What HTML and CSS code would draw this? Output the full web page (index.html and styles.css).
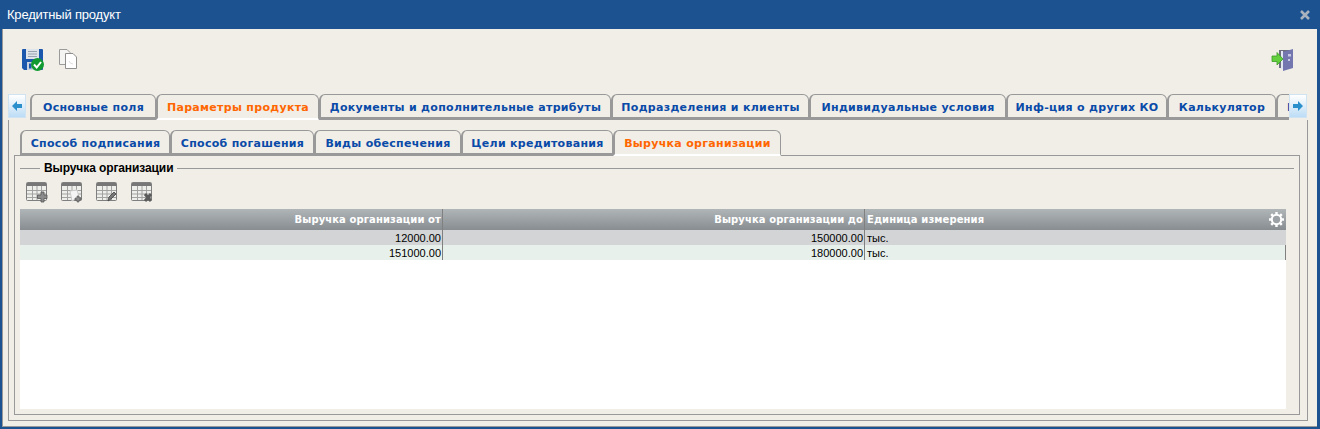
FILE: index.html
```html
<!DOCTYPE html>
<html lang="ru">

<head>
    <title>Кредитный продукт</title>
    <meta charset="UTF-8">
    <link rel="stylesheet" href="styles.css">
</head>

<body>
<div class="window">
    <div class="titlebar">
        <span class="title-text">Кредитный продукт</span>
        <svg class="close-icon" width="10" height="10" viewBox="0 0 10 10">
            <path d="M1 1 L9 9 M9 1 L1 9" stroke="#a9b2bd" stroke-width="2.6" fill="none"/>
        </svg>
    </div>

    <div class="content">
        <!-- верхняя панель -->
        <div class="toolbar">
            <svg class="tool-save" width="23" height="23" viewBox="0 0 23 23">
                <path d="M1 2 Q1 1 2 1 H21 Q22 1 22 2 V21 Q22 22 21 22 H3 L1 20 Z" fill="#1b57ad"/>
                <rect x="5" y="1" width="13" height="10" fill="#dfe3ea"/>
                <path d="M7 3.500 H16 M7 6 H16 M7 8.500 H16" stroke="#9aa3b2" stroke-width="1"/>
                <rect x="6" y="14" width="9" height="8" fill="#c9d1de"/>
                <rect x="8" y="15.500" width="2.500" height="5" fill="#1b57ad"/>
                <circle cx="16.500" cy="16.500" r="6.500" fill="#129a32"/>
                <path d="M13 16.500 L15.700 19.500 L20 14" stroke="#fff" stroke-width="2" fill="none"/>
            </svg>
            <svg class="tool-copy" width="20" height="22" viewBox="0 0 20 22">
                <path d="M1.500 1.500 H9 L12 4.500 V16.500 H1.500 Z" fill="#f4f4f2" stroke="#9b9b9b"/>
                <path d="M7.500 5.500 H15 L18.500 9 V20.500 H7.500 Z" fill="#fff" stroke="#8f8f8f"/>
                <path d="M11 13 Q12 16 15 16" stroke="#ddd" fill="none"/>
            </svg>
            <svg class="tool-exit" width="25" height="23" viewBox="0 0 25 23">
                <path d="M8 2 H21 V20 H8 Z" fill="#6d6f80"/>
                <path d="M12 4 L22 1 V20 L12 23 Z" fill="#7476b0"/>
                <path d="M10 3 H12 V21 H10 Z" fill="#e2e6f2"/>
                <rect x="17" y="6" width="3" height="2.500" fill="#c6c8e4"/>
                <rect x="17" y="11" width="2" height="2" fill="#c6c8e4"/>
                <path d="M1 8 H6 V4.500 L12 11 L6 17 V13.500 H1 Z" fill="#63cf3c" stroke="#3b9a24" stroke-width="0.800"/>
            </svg>
        </div>

        <!-- основные вкладки -->
        <div class="tab-strip">
            <div class="scroll-btn">
                <svg width="10" height="10" viewBox="0 0 10 10"><path d="M0 5 L5 0 V3 H10 V7 H5 V10 Z" fill="#2b8fcb"/></svg>
            </div>
            <div class="tabs tabs-main">
                <div class="tab">Основные поля</div>
                <div class="tab active">Параметры продукта</div>
                <div class="tab">Документы и дополнительные атрибуты</div>
                <div class="tab">Подразделения и клиенты</div>
                <div class="tab">Индивидуальные условия</div>
                <div class="tab">Инф-ция о других КО</div>
                <div class="tab">Калькулятор</div>
                <div class="tab tab-cut">П</div>
            </div>
            <div class="scroll-btn">
                <svg width="10" height="10" viewBox="0 0 10 10"><path d="M10 5 L5 0 V3 H0 V7 H5 V10 Z" fill="#2b8fcb"/></svg>
            </div>
        </div>

        <div class="outer-panel">
            <div class="tabs tabs-sub">
                <div class="tab">Способ подписания</div>
                <div class="tab">Способ погашения</div>
                <div class="tab">Виды обеспечения</div>
                <div class="tab">Цели кредитования</div>
                <div class="tab active">Выручка организации</div>
            </div>

            <div class="inner-panel">
                <div class="legend">
                    <span class="legend-text">Выручка организации</span>
                </div>

                <div class="grid-tools">
                    <svg width="22" height="21" viewBox="0 0 22 21">
                        <use href="#tbl"/>
                        <path d="M15 10 H18 V13 H21 V16.500 H18 V20 H15 V16.500 H11.500 V13 H15 Z" fill="#8b8b8b" stroke="#555" stroke-width="0.800"/>
                    </svg>
                    <svg width="22" height="21" viewBox="0 0 22 21">
                        <use href="#tbl"/>
                        <path d="M9 9 L16 8 L18 15 L11 19 Z" fill="#f4f4f4" stroke="#ccc"/>
                        <path d="M16 14 H18 V16 H20 V18 H18 V20 H16 V18 H14 V16 H16 Z" fill="#8b8b8b" stroke="#555" stroke-width="0.600"/>
                    </svg>
                    <svg width="22" height="21" viewBox="0 0 22 21">
                        <use href="#tbl"/>
                        <path d="M12 19 L13 15 L18 10 L20 12 L15 17 Z" fill="#777" stroke="#444" stroke-width="0.800"/>
                    </svg>
                    <svg width="22" height="21" viewBox="0 0 22 21">
                        <use href="#tbl"/>
                        <path d="M14 12 L20 19 M20 12 L14 19" stroke="#5c5c5c" stroke-width="3"/>
                    </svg>
                </div>

                <div class="grid">
                    <div class="row row-head">
                        <div class="cell num">Выручка организации от</div>
                        <div class="cell num">Выручка организации до</div>
                        <div class="cell unit">Единица измерения</div>
                        <svg class="gear" width="17" height="17" viewBox="0 0 17 17">
                            <path d="M8.500 1 V16 M1 8.500 H16 M3.200 3.200 L13.800 13.800 M13.800 3.200 L3.200 13.800" stroke="#fff" stroke-width="2.400"/>
                            <circle cx="8.500" cy="8.500" r="4.700" fill="#9da2a6" stroke="#fff" stroke-width="2"/>
                        </svg>
                    </div>
                    <div class="row row-selected">
                        <div class="cell num">12000.00</div>
                        <div class="cell num">150000.00</div>
                        <div class="cell unit">тыс.</div>
                    </div>
                    <div class="row row-alt">
                        <div class="cell num">151000.00</div>
                        <div class="cell num">180000.00</div>
                        <div class="cell unit">тыс.</div>
                    </div>
                </div>
            </div>
        </div>
    </div>
</div>

<!-- значок таблицы -->
<svg class="defs" width="0" height="0">
    <defs>
        <g id="tbl">
            <rect x="0.500" y="0.500" width="20" height="18" rx="1" fill="#eeeeea" stroke="#7f7f7f"/>
            <rect x="1" y="1" width="19" height="3" fill="#777"/>
            <path d="M1 8.500 H20 M1 12 H20 M1 15.500 H20 M6.500 4 V18 M11 4 V18 M15.500 4 V18" stroke="#a2a2a2"/>
        </g>
    </defs>
</svg>
</body>

</html>
```
FILE: styles.css
```css
html,
body {
    margin: 0;
    padding: 0;
    height: 100%;
    overflow: hidden;
}

body {
    background-color: #1c5290;
    font-family: "DejaVu Sans", sans-serif;
}

.defs {
    display: block;
}

.window {
    display: flex;
    flex-direction: column;
    height: 429px;
    box-sizing: border-box;
    padding: 0 3px 2px 2px;
}

/* заголовок окна */
.titlebar {
    display: flex;
    justify-content: space-between;
    align-items: center;
    height: 29px;
    flex: none;
    padding: 0 10px 0 5px;
    margin-right: -3px;
    box-sizing: border-box;
}

.title-text {
    font-family: "Liberation Sans", sans-serif;
    font-size: 13px;
    letter-spacing: -0.2px;
    color: #ffffff;
}

.content {
    flex: 1;
    display: flex;
    flex-direction: column;
    background-color: #f1eee7;
    border-left: 1px solid #999999;
    border-bottom: 1px solid #999999;
    min-height: 0;
}

/* верхняя панель */
.toolbar {
    display: flex;
    align-items: flex-start;
    height: 65px;
    flex: none;
    box-sizing: border-box;
    padding: 19px 21px 0 18px;
}

.tool-copy {
    margin-left: 14px;
}

.tool-exit {
    margin-left: auto;
}

/* вкладки */
.tab-strip {
    display: flex;
    flex: none;
    height: 26px;
    margin: 0 10px 0 5px;
}

.scroll-btn {
    flex: none;
    display: flex;
    align-items: center;
    justify-content: center;
    width: 18px;
    height: 24px;
    box-sizing: border-box;
    border: 1px solid #cfe3f3;
    background: linear-gradient(to bottom, #ffffff, #bcdcf5);
}

.tabs {
    display: flex;
    flex: 1;
    min-width: 0;
    overflow: hidden;
}

.tabs-main {
    padding-left: 5px;
    margin-left: -1px;
}

.tab {
    flex: none;
    height: 26px;
    line-height: 25px;
    box-sizing: border-box;
    border: 1px solid #999999;
    border-bottom: 3px solid #999999;
    border-left-width: 2px;
    border-radius: 6px 6px 0 0;
    font-size: 11px;
    font-weight: bold;
    letter-spacing: 0.3px;
    text-align: center;
    white-space: nowrap;
    color: #0a4aa8;
}

.tab.active {
    color: #ff6600;
    border-bottom: 2px solid #ffffff;
}

.tab-cut {
    padding-left: 9px;
    text-align: left;
}

/* ширина вкладок */
.tabs-main .tab:nth-child(1) { width: 126px; }
.tabs-main .tab:nth-child(2) { width: 163px; }
.tabs-main .tab:nth-child(3) { width: 292px; }
.tabs-main .tab:nth-child(4) { width: 198px; }
.tabs-main .tab:nth-child(5) { width: 197px; }
.tabs-main .tab:nth-child(6) { width: 161px; }
.tabs-main .tab:nth-child(7) { width: 109px; }
.tabs-main .tab:nth-child(8) { width: 100px; }

.tabs-sub .tab:nth-child(1) { width: 150px; }
.tabs-sub .tab:nth-child(2) { width: 144px; }
.tabs-sub .tab:nth-child(3) { width: 147px; }
.tabs-sub .tab:nth-child(4) { width: 152px; }
.tabs-sub .tab:nth-child(5) { width: 168px; }

.outer-panel {
    flex: 1;
    display: flex;
    flex-direction: column;
    margin: 0 9px 5px 5px;
    padding: 10px 7px 5px 5px;
    border: 1px solid #999999;
    border-top: 0;
    min-height: 0;
}

.tabs-sub {
    flex: none;
    overflow: visible;
    padding-left: 6px;
    margin-bottom: -1px;
    position: relative;
    z-index: 1;
}

.inner-panel {
    flex: 1;
    display: flex;
    flex-direction: column;
    padding: 5px 13px 5px 5px;
    border: 1px solid #999999;
    min-height: 0;
}

/* группа */
.legend {
    display: flex;
    align-items: center;
    height: 14px;
    flex: none;
    margin-right: -8px;
}

.legend::before,
.legend::after {
    content: "";
    height: 1px;
    background-color: #999999;
}

.legend::before {
    width: 20px;
}

.legend::after {
    flex: 1;
}

.legend-text {
    padding: 0 4px;
    font-family: "Liberation Sans", sans-serif;
    font-size: 12px;
    font-weight: bold;
    letter-spacing: -0.1px;
    color: #000000;
}

.grid-tools {
    display: flex;
    gap: 13px;
    height: 34px;
    flex: none;
    padding: 7px 0 0 6px;
    box-sizing: border-box;
}

/* таблица */
.grid {
    flex: 1;
    background-color: #ffffff;
    font-family: "Liberation Sans", sans-serif;
    font-size: 11px;
}

.row {
    display: grid;
    grid-template-columns: 423px 422px 1fr;
    height: 15px;
    position: relative;
}

.cell {
    line-height: 16px;
    padding: 0 1px;
    overflow: hidden;
    white-space: nowrap;
}

.num {
    text-align: right;
    border-right: 1px solid #808080;
}

.unit {
    padding-left: 2px;
}

.row-head {
    height: 21px;
    background: linear-gradient(to bottom, #b0b5b8, #888d91);
    color: #ffffff;
    font-family: "DejaVu Sans", sans-serif;
    font-weight: bold;
    font-size: 10px;
    letter-spacing: 0.1px;
}

.row-head .cell {
    line-height: 22px;
}

.row-selected {
    background-color: #d2d4d5;
}

.row-alt {
    background-color: #e8f0ec;
}

.row-alt .unit {
    border-right: 1px solid #808080;
}

.gear {
    position: absolute;
    right: 1px;
    top: 2px;
}
```
